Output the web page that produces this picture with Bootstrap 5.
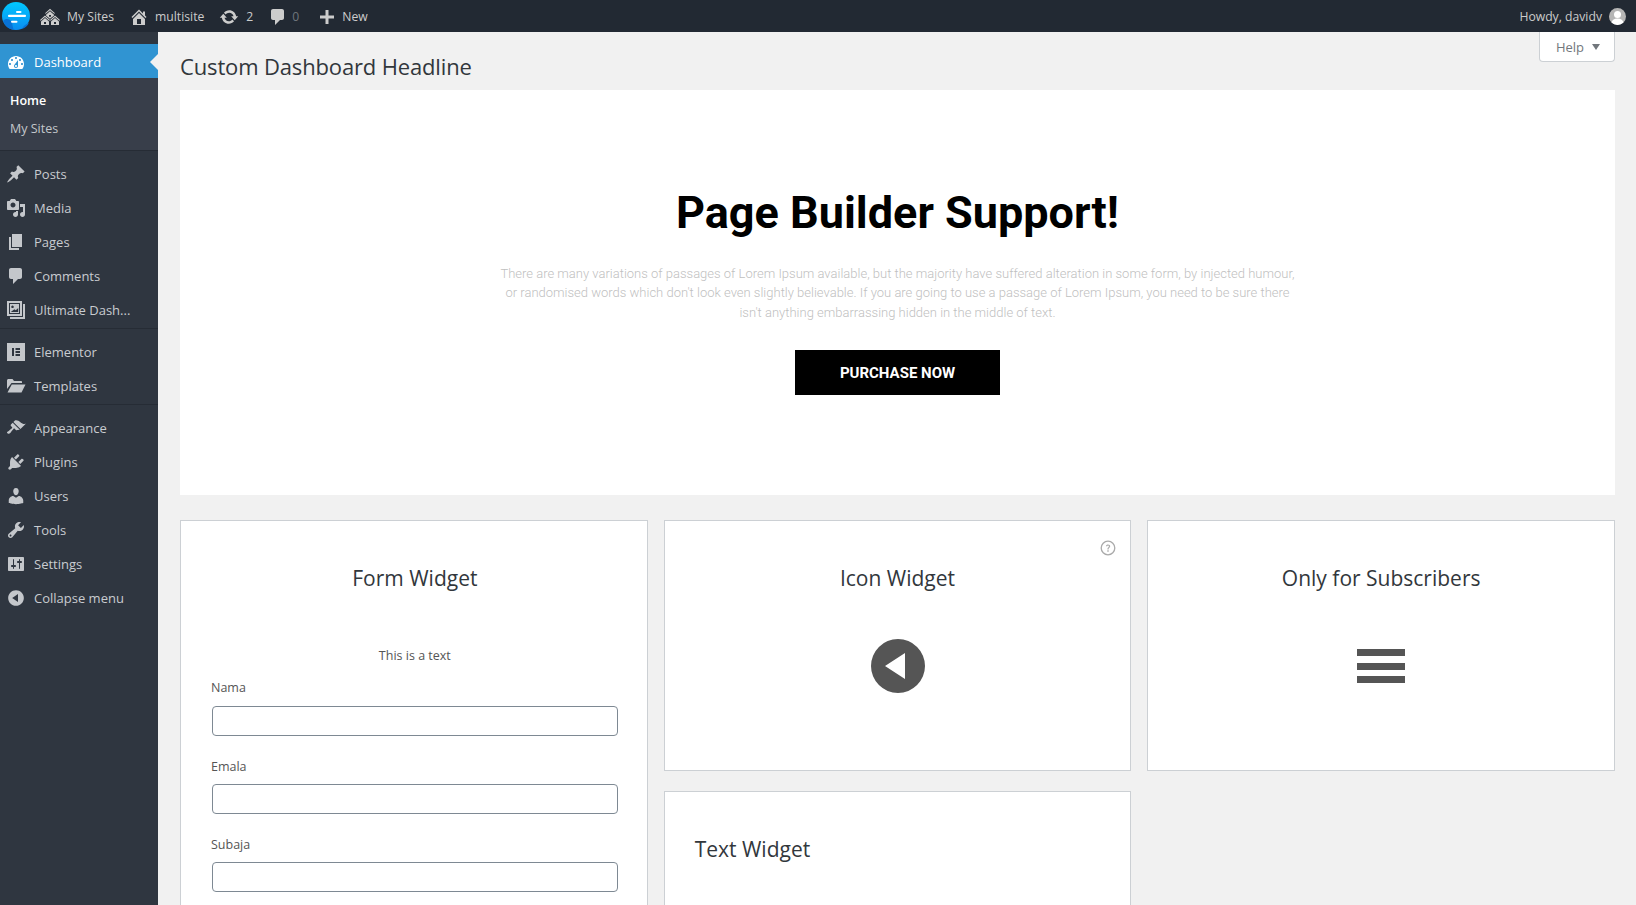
<!DOCTYPE html>
<html lang="en">
<head>
<meta charset="UTF-8">
<meta name="viewport" content="width=device-width, initial-scale=1">
<title>Dashboard</title>
<link href="https://cdn.jsdelivr.net/npm/bootstrap@5.3.2/dist/css/bootstrap.min.css" rel="stylesheet">
<style>
html, body { height: 100%; overflow: hidden; }
body { font-family: "Open Sans", "Liberation Sans", sans-serif; font-size: 13px; background: #f1f1f1; color: #444; }
svg { fill: currentColor; flex-shrink: 0; }

.admin-bar { height: 32px; background: #222933; color: #ccc; padding-left: 2px; padding-right: 10px; }
.bar-item { gap: 7px; font-size: 12.2px; line-height: 20px; }
.bar-item svg { margin-top: 1px; }
.bar-item span { margin-top: 2px; }
.bar-logo { width: 28px; height: 28px; margin-right: 10px; }
.bar-sites { margin-right: 15px; }
.bar-home { margin-right: 15px; gap: 6px; }
.bar-update { margin-right: 15px; }
.bar-comment { margin-right: 18px; gap: 4px; }
.bar-new { gap: 5px; }
.bar-zero { color: #6f757c; }
.avatar { width: 17px; height: 17px; border-radius: 50%; background: #b5b5b5; overflow: hidden; }

.side-menu { width: 158px; background: #2f3640; color: #c9ccd0; flex-shrink: 0; padding-top: 12px; }
.menu-link { height: 34px; padding-left: 6px; gap: 8px; font-size: 13px; color: #c9ccd0; text-decoration: none; }
.menu-link svg { width: 20px; height: 20px; color: #c4c7cb; margin-bottom: 2px; }
.menu-active { background: #3094d2; color: #fff; position: relative; height: 34px; padding-top: 3px; }
.menu-active svg { color: #fff; margin-bottom: 0; }
.menu-active::after { content: ""; position: absolute; right: 0; top: 10px; border: 8px solid transparent; border-right-color: #f1f1f1; border-left-width: 0; }
.sub-menu { background: #383e4a; height: 72px; padding-top: 9px; font-size: 12.5px; }
.sub-link { height: 28px; padding-left: 10px; line-height: 28px; color: #c4c7cb; }
.sub-current { color: #fff; font-weight: 600; }
.menu-group { padding-top: 7px; border-top: 1px solid #262c35; }

.page-main { padding: 0 21px 0 22px; position: relative; min-width: 0; }
.help-tab { position: absolute; top: 0; right: 21px; width: 76px; height: 30px; background: #fff; border: 1px solid #ccd0d4; border-top: 0; border-radius: 0 0 4px 4px; color: #72777c; gap: 8px; font-size: 13px; padding: 2px 0 0 2px; }
.help-arrow { border: 4px solid transparent; border-top: 6px solid #72777c; border-bottom: 0; margin-top: -2px; }
.page-title { font-size: 22px; letter-spacing: -.15px; font-weight: 400; color: #32373c; margin: 0; height: 58px; line-height: 68px; }

.hero-box { height: 405px; background: #fff; padding-top: 91px; }
.hero-title { font-family: Roboto, "Liberation Sans", sans-serif; font-weight: 700; font-size: 45px; line-height: 63px; color: #000; margin: 0 0 19.5px; }
.hero-text { font-family: Roboto, "Liberation Sans", sans-serif; font-weight: 300; font-size: 13px; line-height: 19.5px; color: #bfbfbf; width: 800px; margin: 0 auto 27.5px; }
.hero-btn { font-family: Roboto, "Liberation Sans", sans-serif; font-weight: 700; font-size: 15px; width: 205px; height: 45px; border-radius: 0; background: #000; border: 0; color: #fff; text-transform: uppercase; padding-top: 8px; padding-bottom: 6px; }

.widget-grid { display: grid; grid-template-columns: repeat(3, 1fr); grid-template-rows: 251px 300px; column-gap: 16px; row-gap: 20px; margin-top: 25px; }
.widget-box { background: #fff; border: 1px solid #ccd0d4; position: relative; text-align: center; }
.form-box { grid-row: span 2; padding: 0 29px 0 31px; }
.widget-title { font-size: 21px; font-weight: 400; color: #32373c; margin: 0; line-height: 30px; padding-top: 42px; }
.form-note { font-size: 12.5px; line-height: 18px; color: #555; margin: 54px 0 14px; }
.form-field { text-align: left; margin-bottom: 21px; }
.form-field label { font-size: 12.5px; color: #555; line-height: 18px; margin: 0 0 9px -1px; display: block; }
.form-field + .form-field label { padding-top: 1px; margin-bottom: 8px; }
.form-field input { height: 30px; padding: 0 8px; border: 1px solid #7e8993; border-radius: 4px; min-height: 0; font-size: 13px; }
.widget-icon { margin-top: 46px; }
.circle-icon { width: 54px; height: 54px; color: #555; margin-left: 2px; }
.burger-icon { width: 48px; height: 34px; gap: 6.5px; margin-top: 2px; }
.burger-icon span { height: 7px; background: #555; }
.help-dot { position: absolute; top: 19px; right: 14px; width: 16px; height: 16px; color: #aaa; }
.text-box { text-align: left; padding: 42px 29px 0 30px; }
.text-box .widget-title { padding-top: 0; }
</style>
</head>
<body class="d-flex flex-column">

<!-- top bar -->
<div class="admin-bar d-flex align-items-center justify-content-between flex-shrink-0">
    <div class="d-flex align-items-center">
        <svg class="bar-logo" viewBox="0 0 28 28">
            <defs><linearGradient id="logoFill" x1="0" y1="0" x2="0" y2="1"><stop offset="0" stop-color="#00c8ff"/><stop offset="1" stop-color="#0a8cf0"/></linearGradient></defs>
            <circle cx="14" cy="14" r="14" fill="url(#logoFill)"/>
            <path d="M1 19c3-3 6-2 8 0s1 6 3 8.800C7 27.500 3 24 1 19zM20 27c1-3 4-5 7-6-1.500 3-4 5-7 6z" fill="#0872d6"/>
            <rect x="6" y="12.800" width="18" height="2.200" rx="1" fill="#fff"/>
            <rect x="14" y="9" width="5.500" height="2" rx="1" fill="#fff"/>
            <rect x="9" y="18.800" width="6.500" height="2" rx="1" fill="#fff"/>
        </svg>
        <div class="bar-item bar-sites d-flex align-items-center">
            <svg width="20" height="20" viewBox="0 0 20 20"><path d="M14.27 6.87L10 3.14 5.73 6.87 5 6.14l5-4.38 5 4.38zM14 8.42l-4.05 3.43L6 8.38v-.74l4-3.5 4 3.5v.78zM11 9.7V8H9v1.7h2zm-1.73 4.03L5 10 .73 13.73 0 13l5-4.38L10 13zm10 0L15 10l-4.27 3.73L10 13l5-4.38L20 13zM5 11l4 3.5V18H1v-3.5zm10 0l4 3.5V18h-8v-3.5zM6 17v-2H4v2h2zm10 0v-2h-2v2h2z"/></svg>
            <span>My Sites</span>
        </div>
        <div class="bar-item bar-home d-flex align-items-center">
            <svg width="20" height="20" viewBox="0 0 20 20"><path d="M16 8.5l1.53 1.53-1.06 1.06L10 4.62l-6.47 6.47-1.06-1.06L10 2.5l4 4v-2h2v4zm-6-2.46l6 5.99V18H4v-5.97zM12 17v-5H8v5h4z"/></svg>
            <span>multisite</span>
        </div>
        <div class="bar-item bar-update d-flex align-items-center">
            <svg width="20" height="20" viewBox="0 0 20 20"><path d="M10.2 3.28c3.53 0 6.43 2.61 6.92 6h2.08l-3.5 4-3.5-4h2.32c-.45-1.97-2.21-3.45-4.32-3.45-1.45 0-2.73.71-3.54 1.78L4.95 5.66C6.23 4.2 8.11 3.28 10.2 3.28zm-.4 13.44c-3.52 0-6.43-2.61-6.92-6H.8l3.5-4c1.17 1.33 2.33 2.67 3.5 4H5.48c.45 1.97 2.21 3.45 4.32 3.45 1.45 0 2.73-.71 3.54-1.78l1.71 1.95c-1.28 1.46-3.15 2.38-5.25 2.38z"/></svg>
            <span>2</span>
        </div>
        <div class="bar-item bar-comment d-flex align-items-center">
            <svg width="20" height="20" viewBox="0 0 20 20"><path d="M5 2h9c1.1 0 2 .9 2 2v7c0 1.1-.9 2-2 2h-2l-5 5v-5H5c-1.1 0-2-.9-2-2V4c0-1.1.9-2 2-2z"/></svg>
            <span class="bar-zero">0</span>
        </div>
        <div class="bar-item bar-new d-flex align-items-center">
            <svg width="20" height="20" viewBox="0 0 20 20"><path d="M17 8.5v3h-5.500V17h-3v-5.500H3v-3h5.500V3h3v5.500h5.500z"/></svg>
            <span>New</span>
        </div>
    </div>
    <div class="bar-item d-flex align-items-center">
        <span>Howdy, davidv</span>
        <svg class="avatar" viewBox="0 0 17 17"><circle cx="8.500" cy="6.500" r="3.500" fill="#fff"/><ellipse cx="8.500" cy="15" rx="6" ry="4.500" fill="#fff"/></svg>
    </div>
</div>

<div class="d-flex flex-grow-1 overflow-hidden">
    <!-- side menu -->
    <nav class="side-menu">
        <div class="menu-link menu-active d-flex align-items-center">
            <svg viewBox="0 0 20 20"><path d="M3.760 16h12.480c1.100-1.370 1.760-3.110 1.760-5 0-4.420-3.580-8-8-8s-8 3.580-8 8c0 1.890.66 3.630 1.760 5zM10 4c.55 0 1 .45 1 1s-.45 1-1 1-1-.45-1-1 .45-1 1-1zM6 6c.55 0 1 .45 1 1s-.45 1-1 1-1-.45-1-1 .45-1 1-1zm8 0c.55 0 1 .45 1 1s-.45 1-1 1-1-.45-1-1 .45-1 1-1zm-5.370 5.550L12 7v6c0 1.100-.9 2-2 2s-2-.9-2-2c0-.57.24-1.080.63-1.450zM4 10c.55 0 1 .45 1 1s-.45 1-1 1-1-.45-1-1 .45-1 1-1zm12 0c.55 0 1 .45 1 1s-.45 1-1 1-1-.45-1-1 .45-1 1-1zm-5 3c0-.55-.45-1-1-1s-1 .45-1 1 .45 1 1 1 1-.45 1-1z"/></svg>
            <span>Dashboard</span>
        </div>
        <div class="sub-menu">
            <div class="sub-link sub-current">Home</div>
            <div class="sub-link">My Sites</div>
        </div>
        <div class="menu-group">
            <div class="menu-link d-flex align-items-center"><svg viewBox="0 0 20 20"><path d="M10.440 3.020l1.820-1.820 6.360 6.350-1.830 1.820c-1.050-.68-2.480-.57-3.410.36l-.75.75c-.92.93-1.040 2.350-.35 3.410l-1.830 1.820-2.410-2.410-2.800 2.790c-.42.42-3.380 2.710-3.800 2.290s1.860-3.390 2.280-3.810l2.790-2.790L4.100 9.360l1.830-1.820c1.050.69 2.480.57 3.400-.36l.75-.75c.93-.92 1.050-2.350.36-3.410z"/></svg><span>Posts</span></div>
            <div class="menu-link d-flex align-items-center"><svg viewBox="0 0 20 20"><path d="M13 11V4c0-.55-.45-1-1-1h-1.670L9 1H5L3.670 3H2c-.55 0-1 .45-1 1v7c0 .55.45 1 1 1h10c.55 0 1-.45 1-1zM7 4.500c1.380 0 2.500 1.120 2.500 2.500S8.380 9.500 7 9.500 4.500 8.380 4.500 7 5.620 4.500 7 4.500zM14 6h5v10.500c0 1.380-1.120 2.500-2.500 2.500S14 17.880 14 16.500s1.120-2.500 2.500-2.500c.17 0 .34.02.5.05V9h-3V6zm-4 8.050V13h2v3.500c0 1.380-1.120 2.500-2.500 2.500S7 17.880 7 16.500 8.120 14 9.500 14c.17 0 .34.02.5.05z"/></svg><span>Media</span></div>
            <div class="menu-link d-flex align-items-center"><svg viewBox="0 0 20 20"><path d="M6 15V2h10v13H6zm-1 1h8v2H3V5h2v11z"/></svg><span>Pages</span></div>
            <div class="menu-link d-flex align-items-center"><svg viewBox="0 0 20 20"><path d="M5 2h9c1.100 0 2 .9 2 2v7c0 1.100-.9 2-2 2h-2l-5 5v-5H5c-1.100 0-2-.9-2-2V4c0-1.100.9-2 2-2z"/></svg><span>Comments</span></div>
            <div class="menu-link d-flex align-items-center"><svg viewBox="0 0 20 20"><path fill-rule="evenodd" d="M1 1h15v15H1zM3 3v11h11V3zM4 4h9v9H4zM6.500 5.500a1.300 1.300 0 1 0 .01 0zM4.800 12h7.400V8l-2.400 2.300-1.400-1-3.600 2.700zM17 4h2v15H4v-2h13z"/></svg><span>Ultimate Dash...</span></div>
        </div>
        <div class="menu-group">
            <div class="menu-link d-flex align-items-center"><svg viewBox="0 0 20 20"><path fill-rule="evenodd" d="M1 1h18v18H1zM6 6v8h2V6zM9.500 6v2H14V6zM9.500 9v2H14V9zM9.500 12v2H14v-2z"/></svg><span>Elementor</span></div>
            <div class="menu-link d-flex align-items-center"><svg viewBox="0 0 20 20"><path d="M1 4.500C1 3.700 1.700 3 2.500 3h4L8 5h7c.6 0 1 .4 1 1v1H5.500L1 13zM5.800 8.500H19.500L15.500 16.500H1.500z"/></svg><span>Templates</span></div>
        </div>
        <div class="menu-group">
            <div class="menu-link d-flex align-items-center"><svg viewBox="0 0 20 20"><path d="M14.480 11.060L7.410 3.990l1.500-1.500c.5-.56 2.300-.47 3.510.32 1.210.8 1.430 1.280 2.910 2.100 1.180.64 2.450 1.260 4.450.85zm-.71.71L6.700 4.700 4.930 6.470c-.39.39-.39 1.020 0 1.410l1.060 1.060c.39.39.39 1.030 0 1.420-.6.6-1.430 1.110-2.210 1.690-.35.26-.7.53-1.010.84C1.430 13.230.4 14.370 1.400 15.370c.99.990 2.170.1 3.510-1.240.31-.31.58-.66.85-1.020.57-.78 1.080-1.610 1.690-2.210.39-.39 1.020-.39 1.410 0l1.060 1.060c.39.39 1.020.39 1.410 0z"/></svg><span>Appearance</span></div>
            <div class="menu-link d-flex align-items-center"><svg viewBox="0 0 20 20"><path d="M13.110 4.360L9.870 7.600 8 5.730l3.240-3.240c.35-.34 1.050-.2 1.560.32.52.51.66 1.210.31 1.550zm-8 1.770l.91-1.120 9.010 9.010-1.190.84c-.71.71-2.630 1.160-3.820 1.160H6.140L4.900 17.260c-.59.59-1.540.59-2.120 0-.59-.58-.59-1.530 0-2.120l1.240-1.240v-3.880c0-1.130.4-3.190 1.090-3.890zm7.260 3.970l3.240-3.240c.34-.35 1.040-.21 1.550.31.52.51.66 1.210.31 1.550l-3.240 3.250z"/></svg><span>Plugins</span></div>
            <div class="menu-link d-flex align-items-center"><svg viewBox="0 0 20 20"><path d="M10 9.250c-2.270 0-2.730-3.440-2.730-3.440C7 4.020 7.820 2 9.970 2c2.160 0 2.980 2.020 2.710 3.810 0 0-.41 3.440-2.680 3.440zm0 2.570L12.720 10c2.390 0 4.520 2.330 4.520 4.530v2.490s-3.650 1.130-7.240 1.130c-3.650 0-7.240-1.130-7.240-1.130v-2.490c0-2.250 1.940-4.480 4.470-4.480z"/></svg><span>Users</span></div>
            <div class="menu-link d-flex align-items-center"><svg viewBox="0 0 20 20"><path d="M16.680 9.770c-1.340 1.340-3.300 1.670-4.950.99l-5.410 6.520c-.99.99-2.590.99-3.580 0s-.99-2.59 0-3.570l6.520-5.420c-.68-1.650-.35-3.610.99-4.950 1.280-1.280 3.120-1.620 4.720-1.060l-2.890 2.890 2.820 2.820 2.860-2.870c.53 1.580.18 3.390-1.080 4.650zM3.810 16.210c.4.390 1.040.39 1.430 0 .4-.4.4-1.040 0-1.430-.39-.4-1.030-.4-1.430 0-.39.39-.39 1.030 0 1.430z"/></svg><span>Tools</span></div>
            <div class="menu-link d-flex align-items-center"><svg viewBox="0 0 20 20"><path d="M18 16V4c0-.55-.45-1-1-1H3c-.55 0-1 .45-1 1v12c0 .55.45 1 1 1h14c.55 0 1-.45 1-1zM8 11h1c.55 0 1 .45 1 1s-.45 1-1 1H8v1.500c0 .28-.22.5-.5.5s-.5-.22-.5-.5V13H6c-.55 0-1-.45-1-1s.45-1 1-1h1V5.500c0-.28.22-.5.5-.5s.5.22.5.5V11zm5-2h-1c-.55 0-1-.45-1-1s.45-1 1-1h1V5.500c0-.28.22-.5.5-.5s.5.22.5.5V7h1c.55 0 1 .45 1 1s-.45 1-1 1h-1v5.500c0 .28-.22.5-.5.5s-.5-.22-.5-.5V9z"/></svg><span>Settings</span></div>
            <div class="menu-link d-flex align-items-center"><svg viewBox="0 0 20 20"><path d="M10 2.160c4.330 0 7.840 3.510 7.840 7.840s-3.510 7.840-7.840 7.840S2.160 14.330 2.160 10 5.710 2.160 10 2.160zm2 11.720V6.120L6.180 9.970z"/></svg><span>Collapse menu</span></div>
        </div>
    </nav>

    <!-- page -->
    <main class="page-main flex-grow-1">
        <div class="help-tab d-flex align-items-center justify-content-center">
            <span>Help</span><span class="help-arrow"></span>
        </div>
        <h1 class="page-title">Custom Dashboard Headline</h1>

        <section class="hero-box text-center">
            <h2 class="hero-title">Page Builder Support!</h2>
            <p class="hero-text">There are many variations of passages of Lorem Ipsum available, but the majority have suffered alteration in some form, by injected humour, or randomised words which don't look even slightly believable. If you are going to use a passage of Lorem Ipsum, you need to be sure there isn't anything embarrassing hidden in the middle of text.</p>
            <button type="button" class="btn hero-btn">Purchase Now</button>
        </section>

        <section class="widget-grid">
            <div class="widget-box form-box">
                <h3 class="widget-title">Form Widget</h3>
                <p class="form-note">This is a text</p>
                <div class="form-field"><label>Nama</label><input type="text" class="form-control"></div>
                <div class="form-field"><label>Emala</label><input type="text" class="form-control"></div>
                <div class="form-field"><label>Subaja</label><input type="text" class="form-control"></div>
            </div>
            <div class="widget-box">
                <svg class="help-dot" viewBox="0 0 16 16"><circle cx="8" cy="8" r="6.800" fill="none" stroke="currentColor" stroke-width="1.300"/><path d="M5.900 6.300C6 5 7 4.400 8.100 4.400c1.200 0 2.100.8 2.100 1.800 0 1.600-1.800 1.500-1.600 3.200H7.400c-.2-2.100 1.500-2.100 1.500-3.200 0-.5-.3-.8-.8-.8-.6 0-.9.4-1 .9zM7.300 10.300h1.400v1.400H7.300z"/></svg>
                <h3 class="widget-title">Icon Widget</h3>
                <div class="widget-icon">
                    <svg class="circle-icon" viewBox="0 0 54 54"><path fill-rule="evenodd" d="M27 0a27 27 0 1 1 0 54a27 27 0 0 1 0-54zM34 14L14 27L34 40z"/></svg>
                </div>
            </div>
            <div class="widget-box">
                <h3 class="widget-title">Only for Subscribers</h3>
                <div class="widget-icon d-flex justify-content-center pt-2">
                    <div class="burger-icon d-flex flex-column"><span></span><span></span><span></span></div>
                </div>
            </div>
            <div class="widget-box text-box">
                <h3 class="widget-title">Text Widget</h3>
            </div>
        </section>
    </main>
</div>

<script src="https://cdn.jsdelivr.net/npm/bootstrap@5.3.2/dist/js/bootstrap.bundle.min.js"></script>
</body>
</html>
